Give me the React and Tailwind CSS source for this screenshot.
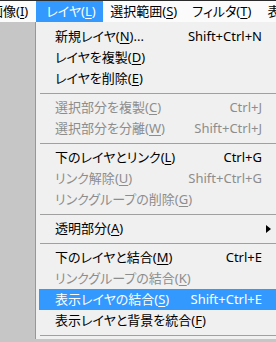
import React from 'react';

const U = ({ children }) => <span className="underline underline-offset-2 decoration-1">{children}</span>;

const items = [
  { label: '新規レイヤ', key: 'N', tail: '...', sc: 'Shift+Ctrl+N' },
  { label: 'レイヤを複製', key: 'D' },
  { label: 'レイヤを削除', key: 'E' },
  { sep: true },
  { label: '選択部分を複製', key: 'C', sc: 'Ctrl+J', off: true },
  { label: '選択部分を分離', key: 'W', sc: 'Shift+Ctrl+J', off: true },
  { sep: true },
  { label: '下のレイヤとリンク', key: 'L', sc: 'Ctrl+G' },
  { label: 'リンク解除', key: 'U', sc: 'Shift+Ctrl+G', off: true },
  { label: 'リンクグループの削除', key: 'G', off: true },
  { sep: true },
  { label: '透明部分', key: 'A', sub: true },
  { sep: true },
  { label: '下のレイヤと結合', key: 'M', sc: 'Ctrl+E' },
  { label: 'リンクグループの結合', key: 'K', off: true },
  { label: '表示レイヤの結合', key: 'S', sc: 'Shift+Ctrl+E', hot: true },
  { label: '表示レイヤと背景を統合', key: 'F' },
  { sep: true },
];

function Row({ it }) {
  if (it.sep) {
    return (
      <div className="h-[8px] pt-[4px] pl-[4px]">
        <div className="h-px bg-[#a0a0a0]" />
      </div>
    );
  }
  const color = it.hot ? 'bg-[#3399ff] text-white' : it.off ? 'text-[#8d8d8d]' : 'text-black';
  return (
    <div className={`h-[21px] ml-[3px] flex items-center pl-[16px] pr-[14px] ${color}`}>
      <span>
        {it.label}(<U>{it.key}</U>){it.tail}
      </span>
      {it.sc && <span className="ml-auto">{it.sc}</span>}
      {it.sub && (
        <svg className="ml-auto mr-[-9px]" width="5" height="8" viewBox="0 0 5 8">
          <path d="M0 0 L5 4 L0 8 Z" fill="#000" />
        </svg>
      )}
    </div>
  );
}

export default function App() {
  return (
    <div className="w-[276px] h-[342px] overflow-hidden bg-[#c6c6c6] font-['Noto_Sans','Noto_Sans_CJK_JP',sans-serif] text-[13px] leading-none [font-feature-settings:'palt']">
      <div className="h-[22px] border-t border-[#2b2b2b] bg-[#fbfbfb] flex items-stretch whitespace-nowrap text-black">
        <div className="ml-[-10px] pr-[8px] flex items-center">
          画像(<U>I</U>)
        </div>
        <div className="w-[67px] shrink-0 bg-[#3399ff] text-white flex items-center pl-[10px]">
          レイヤ(<U>L</U>)
        </div>
        <div className="pl-[7px] pr-[15px] flex items-center">
          選択範囲(<U>S</U>)
        </div>
        <div className="flex items-center pr-[16px]">
          フィルタ(<U>T</U>)
        </div>
        <div className="flex items-center">表示</div>
      </div>
      <div className="flex">
        <div className="w-[35px] shrink-0" />
        <div className="flex-1 border-l border-[#979797] bg-[#f0f0f0] pt-[4px] whitespace-nowrap">
          {items.map((it, i) => (
            <Row key={i} it={it} />
          ))}
        </div>
      </div>
    </div>
  );
}
